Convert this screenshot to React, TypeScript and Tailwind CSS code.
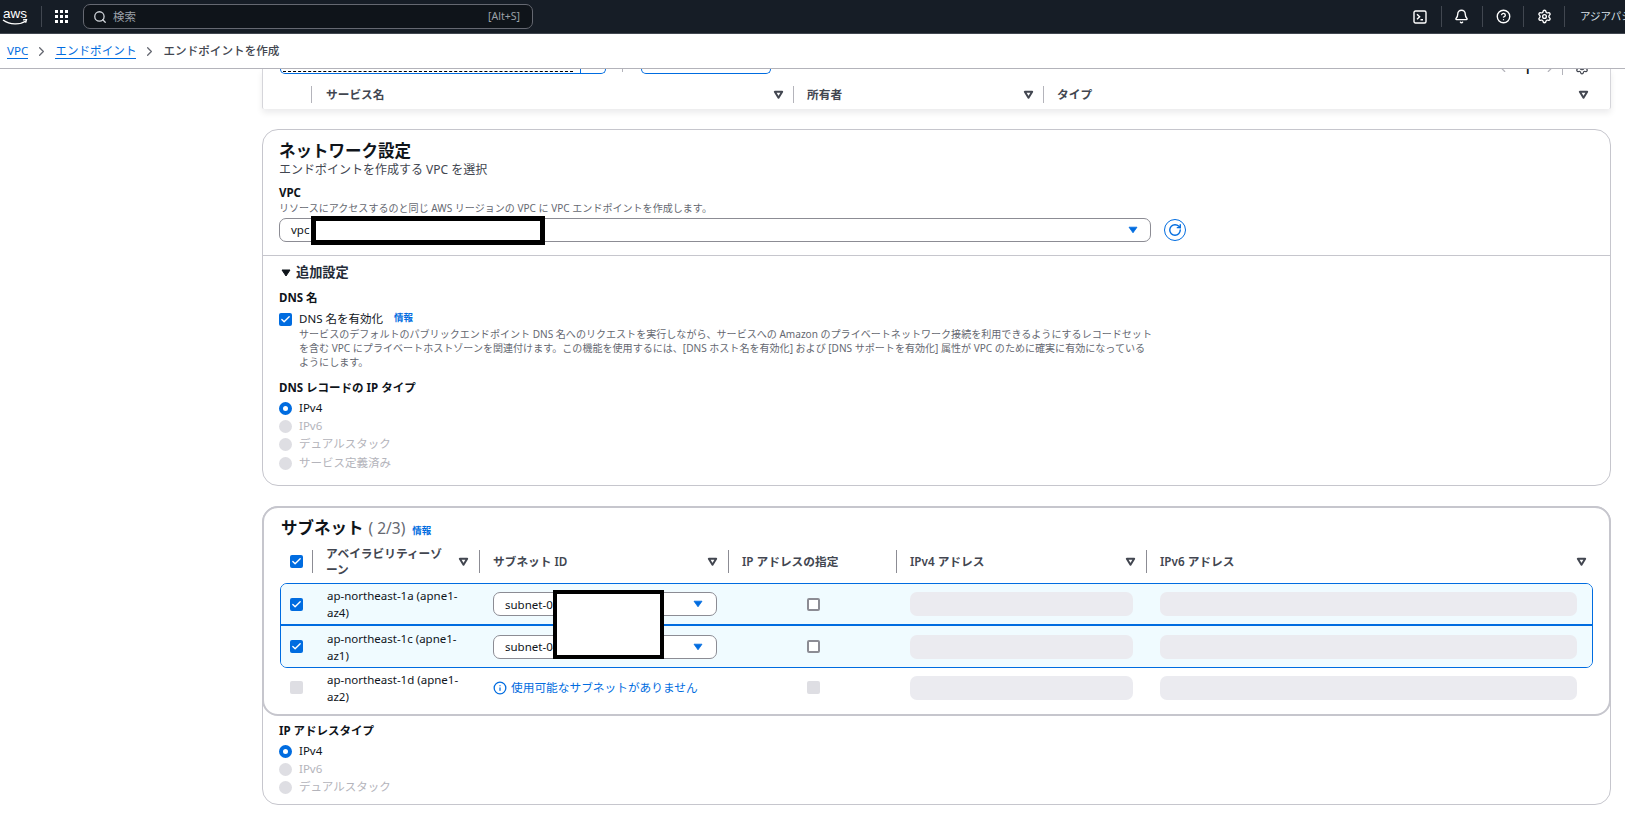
import React from "react";
import { Bell, CircleHelp, Settings, Search, RotateCw, Info, Check, ChevronRight, ChevronLeft } from "lucide-react";

const FONT = "[font-family:'Noto_Sans','Noto_Sans_CJK_JP',sans-serif]";
const GRID = "grid grid-cols-[32px_167px_249px_168px_250px_445px] items-center";

function Sort() {
  return (
    <svg width="11" height="11" viewBox="0 0 12 12" className="shrink-0">
      <path d="M2 3h8L6 9.5z" fill="none" stroke="#424650" strokeWidth="2.2" strokeLinejoin="round" />
    </svg>
  );
}

function Caret() {
  return (
    <svg width="10" height="8" viewBox="0 0 12 10" className="shrink-0">
      <path d="M1 1.5h10L6 8.5z" fill="#006ce0" stroke="#006ce0" strokeLinejoin="round" />
    </svg>
  );
}

function Box({ state }: { state: "on" | "off" | "disabled" }) {
  if (state === "on")
    return (
      <span className="flex h-[13px] w-[13px] items-center justify-center rounded-[2px] bg-[#006ce0]">
        <Check size={11} color="#fff" strokeWidth={3} />
      </span>
    );
  if (state === "off")
    return <span className="block h-[13px] w-[13px] rounded-[2px] border-2 border-[#8c8c94] bg-white" />;
  return <span className="block h-[13px] w-[13px] rounded-[2px] bg-[#dedee3]" />;
}

function Radio({ label, on }: { label: string; on?: boolean }) {
  return (
    <div className="flex h-[18px] items-center gap-[7px]">
      {on ? (
        <span className="h-[13px] w-[13px] rounded-full border-[4px] border-[#006ce0] bg-white" />
      ) : (
        <span className="h-[13px] w-[13px] rounded-full bg-[#dedee3]" />
      )}
      <span className={on ? "text-[11.5px] text-[#0f141a]" : "text-[11.5px] text-[#b4b4bb]"}>{label}</span>
    </div>
  );
}

function HeadCell({ label, sort, last }: { label: React.ReactNode; sort?: boolean; last?: boolean }) {
  return (
    <div className={`flex h-[23px] items-center border-l border-[#8c8c94] pl-[13px] ${last ? "pr-[4px]" : "pr-[10px]"}`}>
      <span className="flex-1 text-[11.7px] font-semibold leading-[16px] text-[#424650]">{label}</span>
      {sort && <Sort />}
    </div>
  );
}

function Row({
  check,
  az1,
  az2,
  sel,
  subnet,
  selected,
  extra,
}: {
  check: "on" | "disabled";
  az1: string;
  az2: string;
  sel?: boolean;
  subnet?: string;
  selected?: boolean;
  extra?: string;
}) {
  return (
    <div className={`${GRID} ${extra ?? ""} ${selected ? "bg-[#f0fbff]" : ""}`}>
      <div className="flex justify-center pr-[2px]">
        <Box state={check} />
      </div>
      <div className="pl-[14px] text-[11.5px] leading-[17px] text-[#0f141a]">
        {az1}
        <br />
        {az2}
      </div>
      <div className="pl-[13px] pr-[12px]">
        {sel ? (
          <div className="flex h-[24px] items-center justify-between rounded-[7px] border border-[#8c8c94] bg-white pl-[11px] pr-[13px] text-[11.5px] text-[#0f141a]">
            <span>{subnet}</span>
            <Caret />
          </div>
        ) : (
          <div className="flex items-center gap-[4px] text-[11.7px] text-[#006ce0]">
            <Info size={14} strokeWidth={2.2} />
            <span>使用可能なサブネットがありません</span>
          </div>
        )}
      </div>
      <div className="flex justify-center">
        <Box state={sel ? "off" : "disabled"} />
      </div>
      <div className="pl-[13px] pr-[14px]">
        <div className="h-[24px] rounded-[7px] bg-[#ebebf0]" />
      </div>
      <div className="pl-[13px] pr-[15px]">
        <div className="h-[24px] rounded-[7px] bg-[#ebebf0]" />
      </div>
    </div>
  );
}

export default function App() {
  return (
    <div className={`relative h-[813px] w-full overflow-hidden bg-white ${FONT}`}>
      {/* top bar */}
      <header className="flex h-[34px] items-center border-b border-[#414750] bg-[#161d26]">
        <div className="relative ml-[1px] w-[28px] text-center leading-none">
          <span className="block text-[13.5px] leading-[13px] text-white [font-family:'Liberation_Sans',sans-serif]">aws</span>
          <svg width="26" height="7" viewBox="0 0 26 7" className="mx-auto -mt-[1px]">
            <path d="M1 1c7 5 17 5 23 1" fill="none" stroke="#fff" strokeWidth="1.4" />
            <path d="M21 .8l3.6-.3-1 3.2" fill="none" stroke="#fff" strokeWidth="1.2" />
          </svg>
        </div>
        <span className="ml-[12px] h-[21px] w-px bg-[#414750]" />
        <div className="ml-[13px] grid grid-cols-3 gap-[2px]">
          {Array.from({ length: 9 }).map((_, i) => (
            <span key={i} className="h-[3px] w-[3px] bg-white" />
          ))}
        </div>
        <div className="ml-[15px] flex h-[25px] w-[450px] items-center rounded-[7px] border border-[#656871] bg-[#0f141a] pl-[9px] pr-[8px]">
          <Search size={14} color="#d1d5db" strokeWidth={2.2} />
          <span className="ml-[6px] flex-1 text-[11.5px] text-[#9ba0a8]">検索</span>
          <span className="mr-[4px] text-[10.5px] text-[#9ba0a8]">[Alt+S]</span>
        </div>
        <div className="flex-1" />
        <svg width="14" height="14" viewBox="0 0 14 14" className="mr-[14px]">
          <rect x="1" y="1" width="12" height="12" rx="1.5" fill="none" stroke="#fff" strokeWidth="1.4" />
          <path d="M4 4.2l2.6 2.5L4 9.2M7.5 9.8H10" fill="none" stroke="#fff" strokeWidth="1.4" />
        </svg>
        <span className="h-[21px] w-px bg-[#414750]" />
        <Bell size={15} color="#fff" strokeWidth={2.2} className="ml-[12px] mr-[13px]" />
        <span className="h-[21px] w-px bg-[#414750]" />
        <CircleHelp size={15} color="#fff" strokeWidth={2.2} className="ml-[13px] mr-[12px]" />
        <span className="h-[21px] w-px bg-[#414750]" />
        <Settings size={15} color="#fff" strokeWidth={2.2} className="ml-[13px] mr-[12px]" />
        <span className="h-[21px] w-px bg-[#414750]" />
        <span className="ml-[15px] w-[45px] overflow-hidden whitespace-nowrap text-[10.5px] text-[#dbe2ea]">アジアパシフィック</span>
      </header>

      {/* breadcrumb */}
      <nav className="flex h-[35px] items-center border-b border-[#b4b4bb] pl-[7px] text-[11.6px]">
        <a className="border-b border-[#006ce0] leading-[15px] text-[#006ce0]">VPC</a>
        <ChevronRight size={15} color="#656871" strokeWidth={2} className="mx-[6px]" />
        <a className="border-b border-[#006ce0] leading-[15px] text-[#006ce0]">エンドポイント</a>
        <ChevronRight size={15} color="#656871" strokeWidth={2} className="mx-[6px]" />
        <span className="font-medium text-[#424650]">エンドポイントを作成</span>
      </nav>

      <main className="ml-[262px] mr-[14px] flex flex-col">
        {/* clipped table container */}
        <section className="h-[40px] rounded-b-[2px] border-x border-[#d5d5da] bg-white shadow-[0_4px_6px_rgba(0,7,22,0.08)]">
          <div className="flex h-[6px] overflow-hidden pl-[17px] pr-[21px]">
            <div className="relative flex h-[5px] w-[326px] items-start justify-end rounded-b-[7px] border-x border-b border-[#006ce0]">
              <div className="absolute left-[2px] top-[2px] h-px w-[290px] border-b border-dashed border-black" />
              <span className="mr-[24px] h-[4px] w-px bg-[#006ce0]" />
            </div>
            <span className="ml-[16px] h-[3px] w-px bg-[#b4b4bb]" />
            <div className="ml-[18px] h-[5px] w-[130px] rounded-b-[7px] border-x border-b border-[#006ce0]" />
            <div className="flex-1" />
            <ChevronLeft size={14} color="#b4b4bb" className="-mt-[8px]" />
            <span className="ml-[14px] text-[13px] font-semibold leading-[0px] text-[#0f141a]">1</span>
            <ChevronRight size={14} color="#b4b4bb" className="ml-[12px] -mt-[8px]" />
            <span className="ml-[5px] h-[6px] w-px bg-[#b4b4bb]" />
            <Settings size={14} color="#424650" className="ml-[12px] -mt-[8px]" />
          </div>
          <div className="mt-[8px] flex h-[23px] items-center pl-[48px] pr-[21px]">
            <div className="flex w-[482px] items-center border-l border-[#b4b4bb] pl-[14px] pr-[9px]">
              <span className="flex-1 text-[11.7px] font-semibold text-[#424650]">サービス名</span>
              <Sort />
            </div>
            <div className="flex w-[250px] items-center border-l border-[#b4b4bb] pl-[13px] pr-[9px]">
              <span className="flex-1 text-[11.7px] font-semibold text-[#424650]">所有者</span>
              <Sort />
            </div>
            <div className="flex flex-1 items-center border-l border-[#b4b4bb] pl-[13px]">
              <span className="flex-1 text-[11.7px] font-semibold text-[#424650]">タイプ</span>
              <Sort />
            </div>
          </div>
        </section>

        {/* network settings */}
        <section className="mt-[20px] h-[357px] rounded-[16px] border border-[#c6c6cd] bg-white">
          <div className="pl-[16px] pt-[9px]">
            <h2 className="text-[16.5px] font-bold leading-[23px] text-[#0f141a]">ネットワーク設定</h2>
            <p className="text-[12px] leading-[16px] text-[#424650]">エンドポイントを作成する VPC を選択</p>
            <p className="mt-[7px] text-[11.5px] font-bold leading-[16px] text-[#0f141a]">VPC</p>
            <p className="text-[10.05px] leading-[14px] text-[#656871]">リソースにアクセスするのと同じ AWS リージョンの VPC に VPC エンドポイントを作成します。</p>
            <div className="mt-[3px] flex items-center">
              <div className="flex h-[24px] w-[872px] items-center justify-between rounded-[7px] border border-[#8c8c94] pl-[11px] pr-[12px] text-[11.5px] text-[#0f141a]">
                <span>vpc</span>
                <Caret />
              </div>
              <span className="ml-[13px] flex h-[22px] w-[22px] items-center justify-center rounded-full border-[1.5px] border-[#006ce0]">
                <RotateCw size={14} color="#006ce0" strokeWidth={2.4} />
              </span>
            </div>
          </div>
          <div className="mt-[13px] border-t border-[#c6c6cd] pl-[16px] pt-[8px]">
            <div className="flex items-center gap-[5px]">
              <svg width="10" height="8" viewBox="0 0 10 8" className="ml-[2px]">
                <path d="M1 1h8L5 7z" fill="#0f141a" stroke="#0f141a" strokeLinejoin="round" />
              </svg>
              <span className="text-[13.2px] font-bold leading-[17px] text-[#232b37]">追加設定</span>
            </div>
            <p className="mt-[9px] text-[11.5px] font-bold leading-[16px] text-[#0f141a]">DNS 名</p>
            <div className="mt-[4px] flex gap-[7px]">
              <span className="mt-[3px]">
                <Box state="on" />
              </span>
              <div>
                <div className="flex h-[17px] items-center">
                  <span className="text-[11.5px] text-[#0f141a]">DNS 名を有効化</span>
                  <span className="ml-[11px] text-[9.5px] font-semibold text-[#006ce0]">情報</span>
                </div>
                <p className="whitespace-nowrap text-[10.05px] leading-[14px] text-[#656871]">
                  サービスのデフォルトのパブリックエンドポイント DNS 名へのリクエストを実行しながら、サービスへの Amazon のプライベートネットワーク接続を利用できるようにするレコードセット
                  <br />
                  を含む VPC にプライベートホストゾーンを関連付けます。この機能を使用するには、[DNS ホスト名を有効化] および [DNS サポートを有効化] 属性が VPC のために確実に有効になっている
                  <br />
                  ようにします。
                </p>
              </div>
            </div>
            <p className="mt-[11px] text-[11.5px] font-bold leading-[16px] text-[#0f141a]">DNS レコードの IP タイプ</p>
            <div className="mt-[3px]">
              <Radio label="IPv4" on />
              <Radio label="IPv6" />
              <Radio label="デュアルスタック" />
              <div className="mt-px">
                <Radio label="サービス定義済み" />
              </div>
            </div>
          </div>
        </section>

        {/* subnets + IP type */}
        <section className="mt-[20px] h-[299px] rounded-[16px] border border-[#c6c6cd] bg-white">
          <div className="-m-px h-[210px] rounded-[16px] border-2 border-[#c6c6cd] pt-[8px]">
            <div className="flex items-baseline pl-[17px]">
              <h2 className="text-[16.5px] font-bold leading-[24px] text-[#0f141a]">サブネット</h2>
              <span className="ml-[5px] text-[15.5px] text-[#656871]">( 2/3)</span>
              <span className="ml-[7px] text-[9.5px] font-semibold text-[#006ce0]">情報</span>
            </div>
            <div className="ml-[16px] mr-[16px]">
              <div className={`${GRID} mt-[1px] h-[42px] pb-[2px]`}>
                <div className="flex justify-center">
                  <Box state="on" />
                </div>
                <HeadCell label={<>アベイラビリティーゾ<br />ーン</>} sort />
                <HeadCell label="サブネット ID" sort />
                <HeadCell label="IP アドレスの指定" />
                <HeadCell label="IPv4 アドレス" sort />
                <HeadCell label="IPv6 アドレス" sort last />
              </div>
              <div className="overflow-hidden rounded-[7px] border border-[#006ce0]">
                <Row selected check="on" az1="ap-northeast-1a (apne1-" az2="az4)" sel subnet="subnet-0" extra="h-[42px] border-b-2 border-[#006ce0]" />
                <Row selected check="on" az1="ap-northeast-1c (apne1-" az2="az1)" sel subnet="subnet-04" extra="h-[41px]" />
              </div>
              <div className="px-px">
                <Row check="disabled" az1="ap-northeast-1d (apne1-" az2="az2)" extra="h-[39px]" />
              </div>
            </div>
          </div>
          <div className="pl-[16px] pt-[8px]">
            <p className="text-[11.5px] font-bold leading-[16px] text-[#0f141a]">IP アドレスタイプ</p>
            <div className="mt-[3px]">
              <Radio label="IPv4" on />
              <Radio label="IPv6" />
              <Radio label="デュアルスタック" />
            </div>
          </div>
        </section>
      </main>

      {/* redaction boxes drawn over the content */}
      <div className="absolute left-[311px] top-[216px] h-[29px] w-[234px] border-[5px] border-black bg-white" />
      <div className="absolute left-[553px] top-[590px] h-[69px] w-[111px] border-[4px] border-black bg-white" />
    </div>
  );
}
